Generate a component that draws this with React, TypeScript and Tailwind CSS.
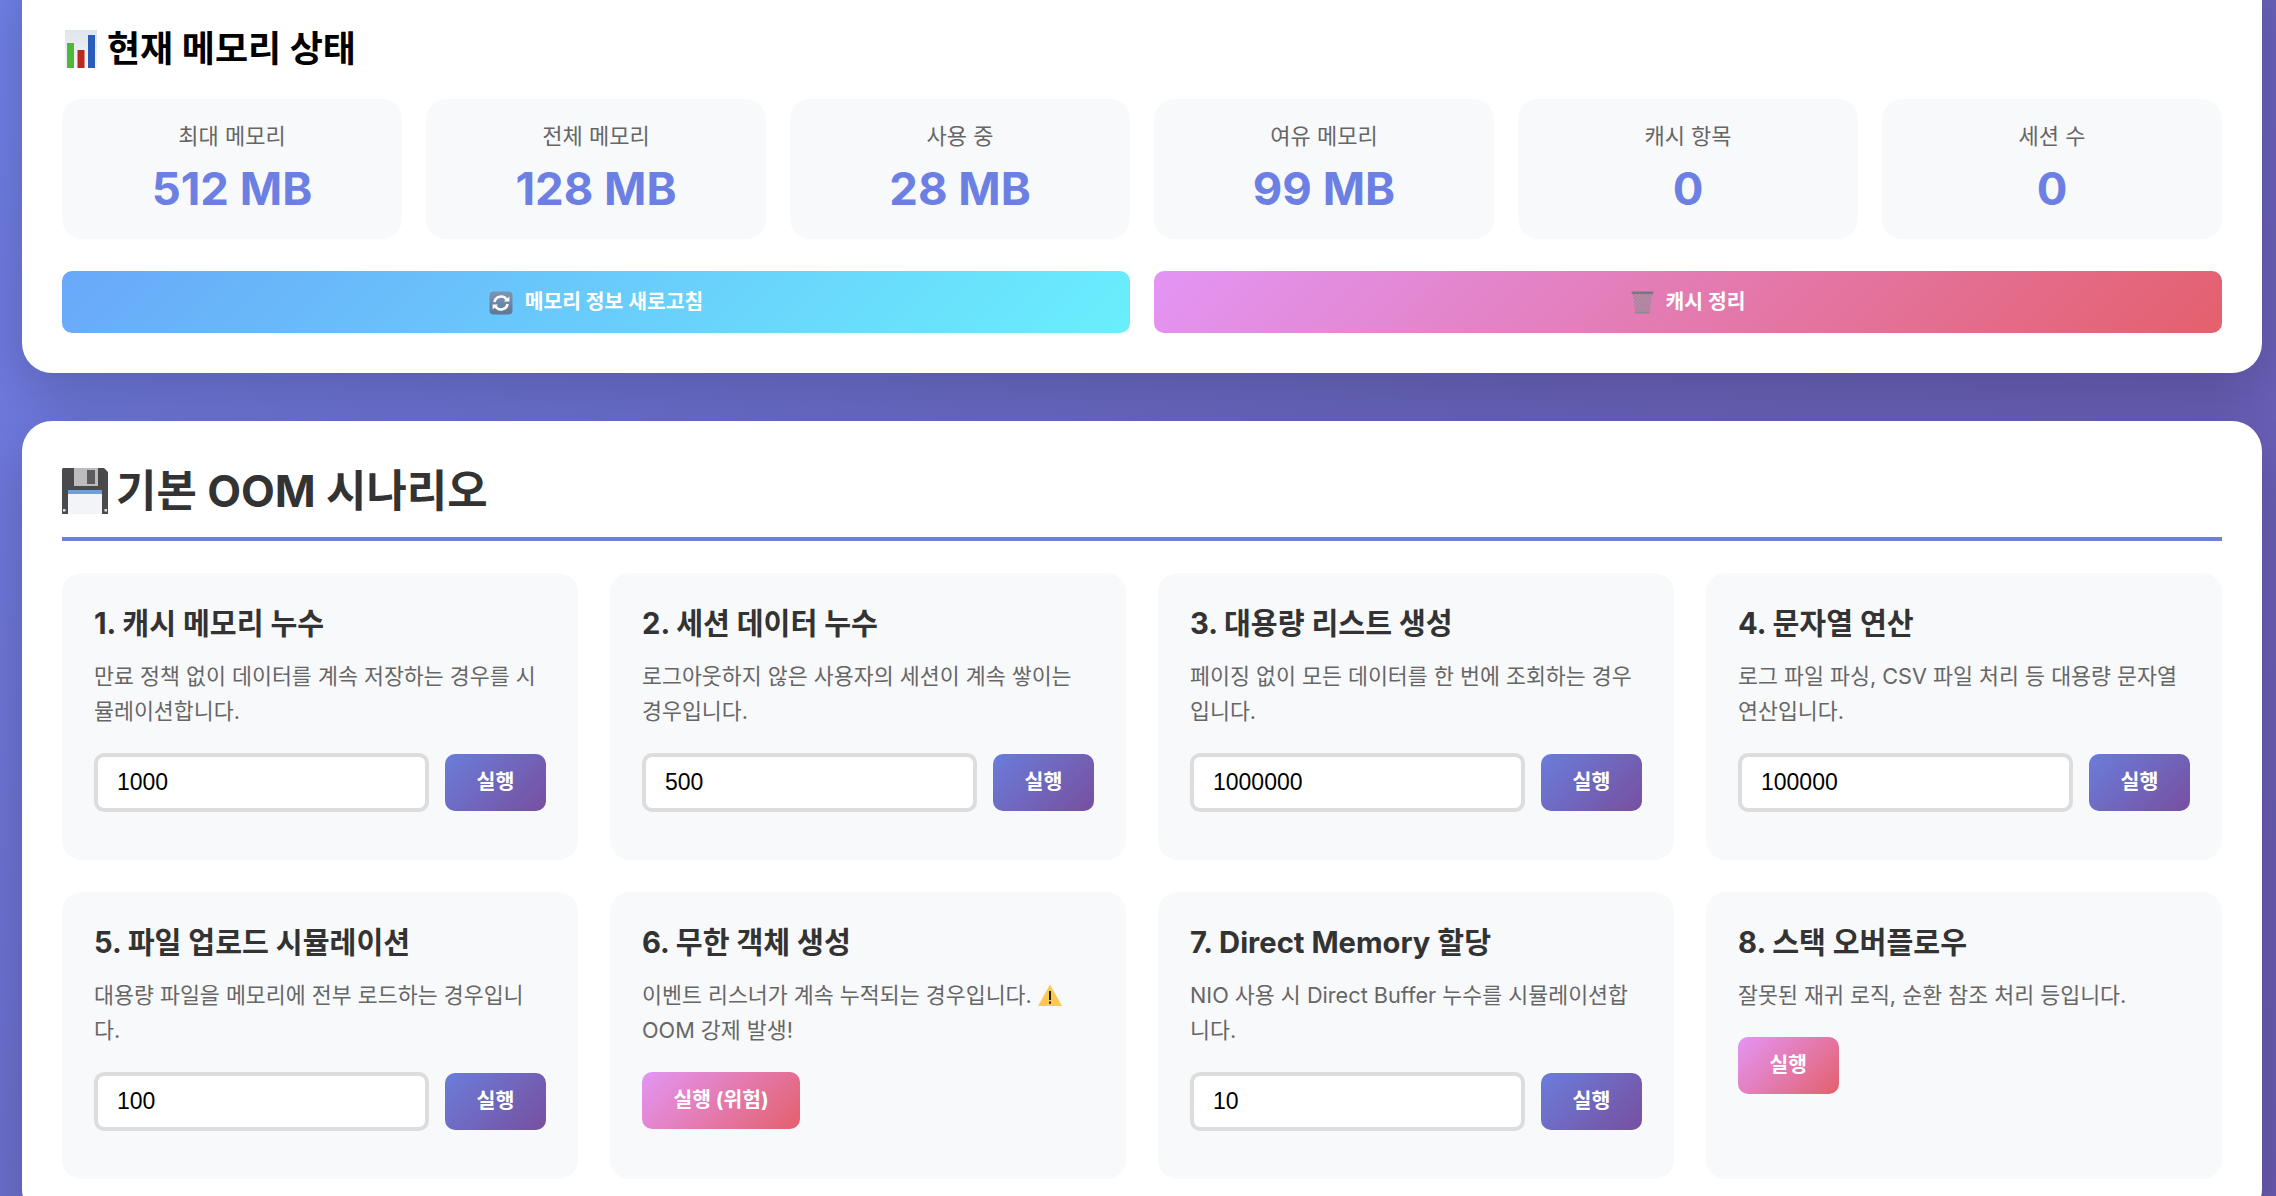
import React from "react";

const ChartIcon = ({ className }: { className: string }) => (
  <svg viewBox="0 0 32 38" className={className}>
    <defs>
      <linearGradient id="chartBg" x1="0" y1="0" x2="0" y2="1">
        <stop offset="0" stopColor="#dfe5ec" />
        <stop offset="1" stopColor="#f5f6f8" />
      </linearGradient>
    </defs>
    <rect width="32" height="38" fill="url(#chartBg)" />
    <rect x="2" y="13" width="7" height="25" fill="#4fb83a" />
    <rect x="12.5" y="20" width="7" height="18" fill="#bb2a1c" />
    <rect x="23" y="5" width="7" height="33" fill="#2a5cba" />
  </svg>
);

const FloppyIcon = ({ className }: { className: string }) => (
  <svg viewBox="0 0 46 46" className={className}>
    <path d="M1 0H42L46 4V46H0V1Z" fill="#4a4a4c" />
    <rect x="12" y="0" width="24" height="18" fill="#bcbcbe" />
    <rect x="25" y="2" width="8" height="14" fill="#5c5c5e" />
    <rect x="6" y="22" width="34" height="24" fill="#f2f4f7" />
    <rect x="6" y="22" width="34" height="4" fill="#6d9fd8" />
    <rect x="1" y="41" width="2.5" height="2.5" fill="#e4e4e4" />
    <rect x="42.5" y="41" width="2.5" height="2.5" fill="#e4e4e4" />
  </svg>
);

const RefreshIcon = ({ className }: { className: string }) => (
  <svg viewBox="0 0 24 24" className={className}>
    <defs>
      <linearGradient id="refreshBg" x1="0" y1="0" x2="0" y2="1">
        <stop offset="0" stopColor="#7c95b6" />
        <stop offset="1" stopColor="#5f7797" />
      </linearGradient>
    </defs>
    <rect x="0.5" y="0.5" width="23" height="23" rx="4" fill="url(#refreshBg)" />
    <g fill="none" stroke="#fff" strokeWidth="2.6">
      <path d="M5.4 11A6.8 6.8 0 0 1 17.6 8.4" />
      <path d="M18.6 13A6.8 6.8 0 0 1 6.4 15.6" />
    </g>
    <path d="M14.8 10.4H20.4V5.4Z" fill="#fff" />
    <path d="M9.2 13.6H3.6V18.6Z" fill="#fff" />
  </svg>
);

const TrashIcon = ({ className }: { className: string }) => (
  <svg viewBox="0 0 23 23" className={className}>
    <defs>
      <pattern id="mesh" width="2.4" height="2.4" patternUnits="userSpaceOnUse" patternTransform="rotate(45)">
        <rect width="2.4" height="2.4" fill="#c488a8" />
        <path d="M0 0H2.4M0 0V2.4" stroke="#83808f" strokeWidth="0.7" />
      </pattern>
    </defs>
    <path d="M1.5 2H21.5L18.5 22H4.5Z" fill="url(#mesh)" />
    <rect x="0.5" y="0.5" width="22" height="2.4" rx="1" fill="#77777f" />
    <rect x="4" y="20.8" width="15" height="1.8" rx="0.8" fill="#8a8a94" />
  </svg>
);

const WarnIcon = ({ className }: { className: string }) => (
  <svg viewBox="0 0 24 22" className={className}>
    <path d="M12 0.5L24 22H0Z" fill="#fbc94f" />
    <rect x="11" y="7" width="2" height="9" fill="#1c1c1c" />
    <rect x="11" y="17.5" width="2" height="2.2" fill="#1c1c1c" />
  </svg>
);

const stats = [
  ["최대 메모리", "512 MB"],
  ["전체 메모리", "128 MB"],
  ["사용 중", "28 MB"],
  ["여유 메모리", "99 MB"],
  ["캐시 항목", "0"],
  ["세션 수", "0"],
];

type Scenario = {
  title: string;
  desc: React.ReactNode;
  value?: string;
  danger?: string;
};

const scenarios: Scenario[] = [
  { title: "1. 캐시 메모리 누수", desc: "만료 정책 없이 데이터를 계속 저장하는 경우를 시뮬레이션합니다.", value: "1000" },
  { title: "2. 세션 데이터 누수", desc: "로그아웃하지 않은 사용자의 세션이 계속 쌓이는 경우입니다.", value: "500" },
  { title: "3. 대용량 리스트 생성", desc: "페이징 없이 모든 데이터를 한 번에 조회하는 경우입니다.", value: "1000000" },
  { title: "4. 문자열 연산", desc: "로그 파일 파싱, CSV 파일 처리 등 대용량 문자열 연산입니다.", value: "100000" },
  { title: "5. 파일 업로드 시뮬레이션", desc: "대용량 파일을 메모리에 전부 로드하는 경우입니다.", value: "100" },
  {
    title: "6. 무한 객체 생성",
    desc: (
      <>
        이벤트 리스너가 계속 누적되는 경우입니다. <WarnIcon className="inline-block w-[24px] h-[22px] align-[-3px]" /> OOM 강제 발생!
      </>
    ),
    danger: "실행 (위험)",
  },
  { title: "7. Direct Memory 할당", desc: "NIO 사용 시 Direct Buffer 누수를 시뮬레이션합니다.", value: "10" },
  { title: "8. 스택 오버플로우", desc: "잘못된 재귀 로직, 순환 참조 처리 등입니다.", danger: "실행" },
];

export default function App() {
  return (
    <div className="h-[1196px] overflow-hidden pl-[22px] pr-[14px] bg-[linear-gradient(135deg,#6f7fe6_0%,#6a65be_55%,#6a5ab2_100%)] [font-family:Inter,'Noto_Sans_CJK_KR',sans-serif]">
      <section className="-mt-[40px] bg-white rounded-[30px] p-[40px] shadow-[0_20px_60px_rgba(0,0,0,0.2)]">
        <h3 className="flex items-center gap-[10px] text-[36px] leading-[48px] font-bold text-black mt-[25px]">
          <ChartIcon className="w-[32px] h-[38px] ml-[3px]" />
          현재 메모리 상태
        </h3>
        <div className="grid grid-cols-6 gap-[24px] mt-[26px]">
          {stats.map(([label, value]) => (
            <div key={label} className="bg-[#f8f9fa] rounded-[20px] h-[140px] pt-[23px] text-center">
              <div className="text-[22px] leading-[28px] text-[#666]">{label}</div>
              <div className="mt-[11px] text-[45.5px] leading-[56px] font-bold text-[#6c80e4]">{value}</div>
            </div>
          ))}
        </div>
        <div className="grid grid-cols-2 gap-[24px] mt-[32px]">
          <button className="h-[62px] pt-[1px] rounded-[10px] flex items-center justify-center gap-[12px] text-white text-[20.4px] font-bold bg-[linear-gradient(135deg,#69a8f9,#69effd)]">
            <RefreshIcon className="w-[24px] h-[24px]" />
            메모리 정보 새로고침
          </button>
          <button className="h-[62px] pt-[1px] rounded-[10px] flex items-center justify-center gap-[12px] text-white text-[20.4px] font-bold bg-[linear-gradient(135deg,#e395f5,#e4606c)]">
            <TrashIcon className="w-[23px] h-[23px]" />
            캐시 정리
          </button>
        </div>
      </section>

      <section className="mt-[48px] bg-white rounded-[30px] p-[40px] shadow-[0_20px_60px_rgba(0,0,0,0.2)]">
        <h2 className="flex items-center gap-[8px] h-[60px] pb-[16px] border-b-[4px] border-[#6c80e4] box-content text-[43.9px] leading-[60px] font-bold text-[#333]">
          <FloppyIcon className="w-[46px] h-[46px]" />
          기본 OOM 시나리오
        </h2>
        <div className="grid grid-cols-4 gap-[32px] mt-[32px]">
          {scenarios.map((s) => (
            <div key={s.title} className="bg-[#f8f9fa] rounded-[20px] px-[32px] pt-[33px] pb-[48px]">
              <h3 className="text-[29.2px] leading-[36px] font-bold text-[#333]">{s.title}</h3>
              <p className="mt-[17px] text-[21.7px] leading-[35px] text-[#666]">{s.desc}</p>
              <div className="mt-[24px] flex items-center gap-[16px]">
                {s.value && (
                  <input
                    readOnly
                    value={s.value}
                    className="w-[335px] h-[59px] bg-white border-[4px] border-[#ddd] rounded-[10px] px-[19px] text-[23px] text-black [font-family:'Liberation_Sans',sans-serif] outline-none"
                  />
                )}
                {s.value ? (
                  <button className="w-[101px] h-[57px] pb-[1px] rounded-[10px] text-white text-[20.6px] font-bold bg-[linear-gradient(135deg,#6a7ddb,#774f9f)]">실행</button>
                ) : (
                  <button className="h-[57px] px-[31.5px] pb-[1px] rounded-[10px] text-white text-[20.4px] font-bold bg-[linear-gradient(135deg,#e395f5,#e4606c)]">{s.danger}</button>
                )}
              </div>
            </div>
          ))}
        </div>
      </section>
    </div>
  );
}
